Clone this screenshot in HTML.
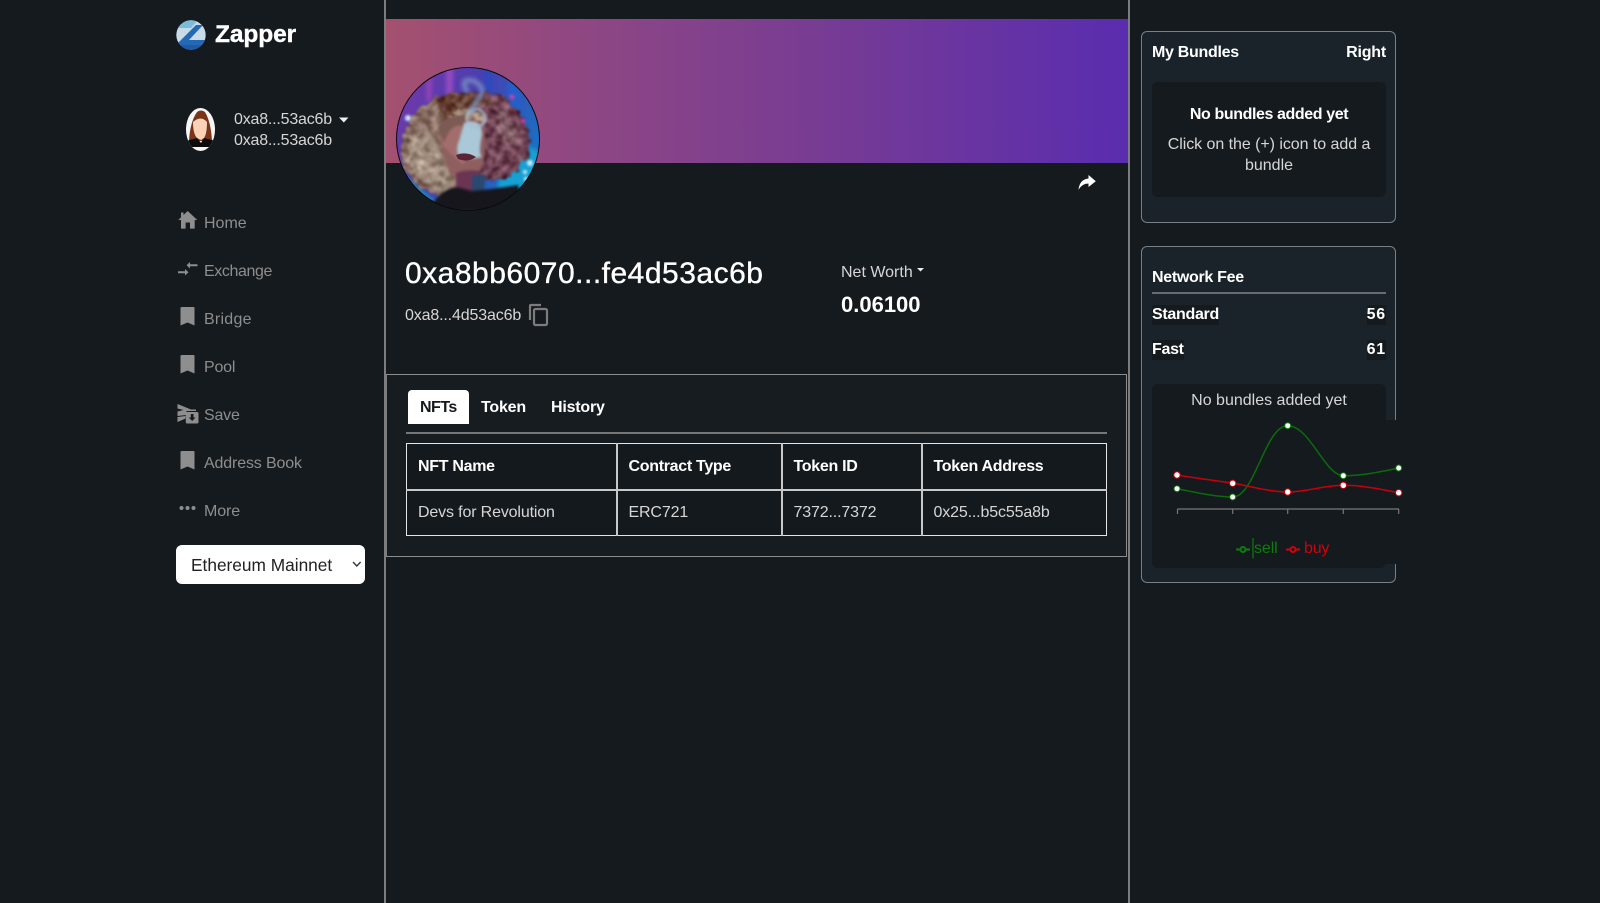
<!DOCTYPE html>
<html lang="en"><head><meta charset="utf-8"><title>Zapper</title>
<style>
html,body{margin:0;padding:0;width:1600px;height:903px;overflow:hidden;background:#151a1e;color:#fff;font-family:"Liberation Sans",sans-serif;font-size:16px}
.a{position:absolute;white-space:nowrap;line-height:20px}
.b{font-weight:700}
.g{color:#d6d6d6}
.n{color:#8e8e8e;left:204px}
.box{position:absolute;box-sizing:border-box}
svg{position:absolute;overflow:visible}
table{position:absolute;left:406px;top:443px;width:701px;height:93px;border-collapse:collapse;table-layout:fixed;background:#14191d;border:1px solid #e4e4e4}
td,th{border:1px solid #e4e4e4;border-left:2px solid #c8c8c8;padding:0 0 0 11px;text-align:left;font-size:16px;line-height:20px}
td:first-child,th:first-child{border-left:1px solid #e4e4e4}
td{color:#d6d6d6;letter-spacing:-.15px;padding-top:1px}
th{letter-spacing:-.3px;border-bottom:2px solid #c8c8c8;padding-top:1px}
</style></head><body>

<div class="box" style="left:384px;top:0;width:2px;height:903px;background:#7d7d7d"></div>
<div class="box" style="left:1128px;top:0;width:2px;height:903px;background:#7d7d7d"></div>

<!-- logo -->
<svg style="left:176px;top:20px" width="30" height="30" viewBox="0 0 30 30">
<defs><clipPath id="lc"><circle cx="15" cy="15" r="14.7"/></clipPath></defs>
<g clip-path="url(#lc)"><rect width="30" height="30" fill="#c9dbe6"/>
<path d="M0 0H22L15 8H0Z" fill="#79bdd8"/>
<path d="M20 5H27L13 20H30V30H0V25Z" fill="#2568b6"/>
<path d="M0 30H30V25H0Z" fill="#1f5aa4"/></g></svg>
<div class="a b" style="left:215px;top:21px;font-size:24.5px;line-height:28px;-webkit-text-stroke:.4px #fff;letter-spacing:-.1px">Zapper</div>

<!-- user -->
<svg style="left:186px;top:108px" width="30" height="44" viewBox="0 0 30 44">
<defs><clipPath id="uc"><ellipse cx="14.5" cy="21.5" rx="14.5" ry="21.5"/></clipPath></defs>
<g clip-path="url(#uc)"><rect width="30" height="44" fill="#f7f7f7"/>
<path d="M11 4Q15 1 19 4Q25 14 26 33H3Q4 14 11 4Z" fill="#7a3518"/>
<path d="M7 14Q15 7 21 14Q21 26 18 30L15 32L11 30Q7 26 7 14Z" fill="#fbd1b8"/>
<path d="M0 33L11 30L15 35L18 30L30 33V39H0Z" fill="#0b0b0b"/></g></svg>
<div class="a g" style="left:234px;top:110px;letter-spacing:-.2px">0xa8...53ac6b</div>
<div class="a g" style="left:234px;top:131px;letter-spacing:-.2px">0xa8...53ac6b</div>
<svg style="left:339px;top:117px" width="10" height="6"><path d="M0 .5H9.5L4.8 5.5Z" fill="#eee"/></svg>

<!-- nav -->
<svg style="left:178px;top:211px" width="20" height="18" viewBox="0 0 20 18"><path d="M9.7 0L19.3 9H16.7V17.6H12V11.5H7.6V17.6H3V9H.2L3 6.4V1.5H5.5V4Z" fill="#8e8e8e"/></svg>
<div class="a n" style="top:214px">Home</div>
<svg style="left:178px;top:261px" width="20" height="16" viewBox="0 0 20 16"><path d="M0 10.200H7V8L10.500 11.200L7 14.500V12.200H0ZM19.500 3.200H12V1L8.500 4.200L12 7.500V5.200H19.500Z" fill="#8e8e8e"/></svg>
<div class="a n" style="top:262px;letter-spacing:-.4px">Exchange</div>
<svg style="left:180px;top:307px" width="15" height="19" viewBox="0 0 15 19"><path d="M1.500 0H13.500Q14.500 0 14.500 1V18.500L7.500 15.500L.5 18.500V1Q.5 0 1.500 0Z" fill="#8e8e8e"/></svg>
<div class="a n" style="top:310px;letter-spacing:.25px">Bridge</div>
<svg style="left:180px;top:355px" width="15" height="19" viewBox="0 0 15 19"><path d="M1.500 0H13.500Q14.500 0 14.500 1V18.500L7.500 15.500L.5 18.500V1Q.5 0 1.500 0Z" fill="#8e8e8e"/></svg>
<div class="a n" style="top:358px;letter-spacing:-.2px">Pool</div>
<svg style="left:177px;top:404px" width="22" height="20" viewBox="0 0 22 20"><path d="M.5 0L14 5.500H19V7H9.500V11L.5 12V7.500L6.500 6L.5 4.500ZM.5 13L8.500 12V14.500L.5 18Z" fill="#8e8e8e"/><path d="M10 8H20Q21.500 8 21.500 9.500V18Q21.500 19.500 20 19.500H10Q8.800 19.500 8.800 18V9.500Q8.800 8 10 8Z" fill="#8e8e8e"/><path d="M13.800 10H16.500V13.500H18.500L15.200 17L11.800 13.500H13.800Z" fill="#151a1e"/></svg>
<div class="a n" style="top:406px;letter-spacing:-.2px">Save</div>
<svg style="left:180px;top:451px" width="15" height="19" viewBox="0 0 15 19"><path d="M1.500 0H13.500Q14.500 0 14.500 1V18.500L7.500 15.500L.5 18.500V1Q.5 0 1.500 0Z" fill="#8e8e8e"/></svg>
<div class="a n" style="top:454px;letter-spacing:-.15px">Address Book</div>
<svg style="left:179px;top:505px" width="17" height="6"><circle cx="2.500" cy="3" r="2" fill="#8e8e8e"/><circle cx="8.500" cy="3" r="2" fill="#8e8e8e"/><circle cx="14.500" cy="3" r="2" fill="#8e8e8e"/></svg>
<div class="a n" style="top:502px;letter-spacing:-.1px">More</div>

<div class="box" style="left:176px;top:545px;width:189px;height:39px;background:#fff;border-radius:6px"></div>
<div class="a" style="left:191px;top:555px;color:#222;font-size:17.3px">Ethereum Mainnet</div>
<svg style="left:352px;top:561px" width="10" height="7"><path d="M1 1L4.800 5L8.600 1" stroke="#333" stroke-width="1.300" fill="none"/></svg>

<!-- banner -->
<div class="box" style="left:386px;top:19px;width:742px;height:144px;background:linear-gradient(90deg,#a4516f 0%,#8c4685 30%,#763b94 60%,#5a2daf 100%)"></div>

<!-- photo -->
<svg style="left:396px;top:67px" width="144" height="144" viewBox="0 0 144 144">
<defs>
<clipPath id="pc"><circle cx="72" cy="72" r="71.500"/></clipPath>
<linearGradient id="bg" x1="0" x2="1" y1="0" y2=".5"><stop offset="0" stop-color="#7b36a8"/><stop offset=".5" stop-color="#4a3fb0"/><stop offset="1" stop-color="#1a6fc4"/></linearGradient>
<filter id="curl" x="-10%" y="-10%" width="120%" height="120%" color-interpolation-filters="sRGB"><feTurbulence type="fractalNoise" baseFrequency=".14" numOctaves="2" seed="7" result="n"/><feDisplacementMap in="SourceGraphic" in2="n" scale="9" xChannelSelector="R" yChannelSelector="G" result="d"/><feColorMatrix in="n" type="matrix" values="1 0 0 0 0 1 0 0 0 0 1 0 0 0 0 0 0 0 0 1" result="g"/><feComposite in="g" in2="d" operator="in" result="gc"/><feComposite in="d" in2="gc" operator="arithmetic" k1="0" k2="1" k3=".6" k4="-.32" result="m"/><feGaussianBlur in="m" stdDeviation="1"/></filter>
<filter id="bl" x="-30%" y="-30%" width="160%" height="160%"><feGaussianBlur stdDeviation="2"/></filter>
<filter id="bl2" x="-30%" y="-30%" width="160%" height="160%"><feGaussianBlur stdDeviation="1.300"/></filter>
</defs>
<g clip-path="url(#pc)">
<rect width="144" height="144" fill="url(#bg)"/>
<g filter="url(#bl)" opacity=".8"><rect x="30" y="0" width="6" height="35" fill="#9a45b8"/><rect x="50" y="0" width="7" height="30" fill="#a650c4"/><rect x="88" y="0" width="9" height="35" fill="#2b4cc0"/><rect x="112" y="10" width="12" height="50" fill="#2262d0"/></g>
<path d="M105 85Q130 75 144 85V144H100Z" fill="#19a0d4" filter="url(#bl)"/>
<path d="M0 100L50 144H0Z" fill="#1493c0" filter="url(#bl)"/>
<g filter="url(#curl)">
<path d="M66 28Q106 16 126 50Q140 76 128 96Q112 118 86 112Q60 108 66 28Z" fill="#744858"/>
<path d="M80 28Q44 20 20 46Q0 70 6 98Q24 134 62 130Q76 112 72 70Z" fill="#8e7468"/>
<path d="M38 32Q70 18 102 38Q76 38 50 54Z" fill="#6b4538"/>
<path d="M12 70Q34 54 44 84Q58 112 60 128Q30 124 14 100Z" fill="#a39080"/>
<path d="M58 44Q76 36 92 52Q80 60 56 56Z" fill="#a8927e"/>
<path d="M98 40Q120 50 124 76Q112 84 104 66Z" fill="#86606a"/>
</g>
<path d="M44 58Q66 44 88 58Q92 84 84 104Q72 116 60 112Q44 96 44 58Z" fill="#8f5f60" filter="url(#bl2)"/>
<path d="M46 62Q62 52 68 62L68 98Q56 88 46 78Z" fill="#a26e6c" filter="url(#bl2)"/>
<path d="M42 60Q50 48 70 48L68 58Q54 56 48 76Z" fill="#7d5a52" filter="url(#bl2)"/>
<path d="M68 56Q86 50 86 68Q82 86 86 90Q70 94 62 88Q60 80 63 74Z" fill="#a9c8d8" filter="url(#bl2)"/>
<circle cx="80" cy="51" r="9" fill="none" stroke="#a9bdd0" stroke-width="3" opacity=".8" filter="url(#bl2)"/>
<path d="M72 26Q62 10 78 14Q92 22 82 32Q78 38 74 46" fill="none" stroke="#7c97c4" stroke-width="5" opacity=".8" filter="url(#bl)"/>
<path d="M60 88Q70 84 80 90Q72 96 62 92Z" fill="#5a2436"/>
<path d="M60 106Q70 102 84 104L84 126H60Z" fill="#6a3552" filter="url(#bl2)"/>
<path d="M76 108L90 108L88 126L76 126Z" fill="#2a4a70" filter="url(#bl2)"/>
<path d="M32 144Q44 122 60 120L76 124Q98 122 122 118L128 144Z" fill="#12151f" filter="url(#bl2)"/>
<g fill="#cdeefa" filter="url(#bl2)"><circle cx="12" cy="51" r="3"/><circle cx="134" cy="96" r="3"/><circle cx="129" cy="105" r="2"/><circle cx="130" cy="112" r="2"/></g>
<g fill="#c145a8" filter="url(#bl2)"><circle cx="116" cy="30" r="2.500"/><circle cx="127" cy="54" r="2.500"/></g>
</g>
<circle cx="72" cy="72" r="71.500" fill="none" stroke="#0a0a0e" stroke-width="1"/>
</svg>

<!-- share -->
<svg style="left:1078px;top:175px" width="18" height="15" viewBox="0 0 18 15"><path d="M10.500 0L17.800 6.300L10.500 12V8.500Q4 8.500 .5 14.800Q1.500 4.500 10.500 3.500Z" fill="#fff"/></svg>

<!-- headline -->
<div class="a" style="left:405px;top:256px;font-size:30px;line-height:36px;letter-spacing:.5px;-webkit-text-stroke:.35px #fff">0xa8bb6070...fe4d53ac6b</div>
<div class="a g" style="left:405px;top:306px;letter-spacing:-.15px">0xa8...4d53ac6b</div>
<svg style="left:529px;top:304px" width="19" height="22" viewBox="0 0 19 22"><path d="M1 16V2Q1 1 2 1H12" fill="none" stroke="#7c7c7c" stroke-width="2.200"/><rect x="5" y="5" width="13" height="16" rx="1.500" fill="none" stroke="#7c7c7c" stroke-width="2.200"/></svg>

<div class="a g" style="left:841px;top:263px;letter-spacing:0">Net Worth</div>
<svg style="left:917px;top:268px" width="7" height="4"><path d="M0 0H7L3.500 3.500Z" fill="#eee"/></svg>
<div class="a b" style="left:841px;top:295px;font-size:22px">0.06100</div>

<!-- section -->
<div class="box" style="left:386px;top:374px;width:741px;height:183px;border:1px solid #8c8c8c;border-width:1px 1px 1px 0;background:#161c20"></div>
<div class="box" style="left:386px;top:375px;width:1px;height:181px;background:#7d7d7d"></div>
<div class="box" style="left:408px;top:390px;width:61px;height:34px;background:#fff;border-radius:4px 4px 0 0"></div>
<div class="a b" style="left:420px;top:398px;color:#15191d;letter-spacing:-.5px">NFTs</div>
<div class="a b" style="left:481px;top:398px;letter-spacing:-.2px">Token</div>
<div class="a b" style="left:551px;top:398px;letter-spacing:-.2px">History</div>
<div class="box" style="left:406px;top:432px;width:701px;height:2px;background:#777"></div>

<table><colgroup><col style="width:210px"><col style="width:165px"><col style="width:140px"><col></colgroup>
<tr><th>NFT Name</th><th>Contract Type</th><th>Token ID</th><th>Token Address</th></tr>
<tr><td>Devs for Revolution</td><td>ERC721</td><td>7372...7372</td><td>0x25...b5c55a8b</td></tr></table>

<!-- right cards -->
<div class="box" style="left:1141px;top:31px;width:255px;height:192px;background:#1a232a;border:1.500px solid #7a8084;border-radius:6px"></div>
<div class="a b" style="left:1152px;top:43px;letter-spacing:-.3px">My Bundles</div>
<div class="a b" style="right:214px;top:43px;letter-spacing:-.2px">Right</div>
<div class="box" style="left:1152px;top:82px;width:234px;height:115px;background:#151a1e;border-radius:6px"></div>
<div class="a b" style="left:1152px;width:234px;text-align:center;top:105px;letter-spacing:-.4px">No bundles added yet</div>
<div class="a g" style="left:1152px;width:234px;text-align:center;top:135px;letter-spacing:-.05px">Click on the (+) icon to add a</div>
<div class="a g" style="left:1152px;width:234px;text-align:center;top:156px">bundle</div>

<div class="box" style="left:1141px;top:246px;width:255px;height:337px;background:#1a232a;border:1.500px solid #7a8084;border-radius:6px"></div>
<div class="a b" style="left:1152px;top:268px;letter-spacing:-.3px">Network Fee</div>
<div class="box" style="left:1152px;top:292px;width:234px;height:2px;background:#666c70"></div>
<div class="a b" style="left:1152px;top:305px;background:#151a1e;letter-spacing:-.3px">Standard</div>
<div class="a b" style="right:214px;top:305px;background:#151a1e;letter-spacing:.8px">56</div>
<div class="a b" style="left:1152px;top:340px;background:#151a1e;letter-spacing:-.3px">Fast</div>
<div class="a b" style="right:214px;top:340px;background:#151a1e;letter-spacing:.8px">61</div>
<div class="box" style="left:1152px;top:384px;width:234px;height:184px;background:#151a1e;border-radius:6px"></div>
<div class="a g" style="left:1152px;width:234px;text-align:center;top:391px;letter-spacing:0">No bundles added yet</div>

<!-- chart -->
<svg style="left:0;top:0" width="1600" height="903">
<rect x="1152" y="420" width="250" height="144" fill="#151a1e"/>
<path d="M1177.500 509V514M1177.500 509H1399M1232.700 509V514M1287.700 509V514M1343.300 509V514M1398.700 509V514" stroke="#777" stroke-width="1.200" fill="none"/>
<path d="M1177 488.700C1195 492 1215 497 1232.700 497C1255 497 1265 425.700 1287.700 425.700C1310 425.700 1325 475.700 1343.300 475.700C1362 475.700 1380 472 1398.700 468" stroke="#0b6b0b" stroke-width="1.500" fill="none"/>
<path d="M1177 475C1195 478 1215 480.500 1232.700 483.300C1250 486 1270 492 1287.700 492C1305 492 1325 485.300 1343.300 485.300C1362 485.300 1380 489 1398.700 492.700" stroke="#c8000a" stroke-width="1.500" fill="none"/>
<g fill="#fff" stroke="#0b7d0b" stroke-width="1"><circle cx="1177" cy="488.700" r="3"/><circle cx="1232.700" cy="497" r="3"/><circle cx="1287.700" cy="425.700" r="3"/><circle cx="1343.300" cy="475.700" r="3"/><circle cx="1398.700" cy="468" r="3"/></g>
<g fill="#fff" stroke="#d4000a" stroke-width="1"><circle cx="1177" cy="475" r="3.200"/><circle cx="1232.700" cy="483.300" r="3.200"/><circle cx="1287.700" cy="492" r="3.200"/><circle cx="1343.300" cy="485.300" r="3.200"/><circle cx="1398.700" cy="492.700" r="3.200"/></g>
<path d="M1236 549.500H1250" stroke="#0b7d0b" stroke-width="2"/><circle cx="1243" cy="549.500" r="2.500" fill="#151a1e" stroke="#0b7d0b" stroke-width="2"/>
<path d="M1253 538V558.500" stroke="#0b7d0b" stroke-width="1.200"/>
<path d="M1286 549.500H1300" stroke="#d4000a" stroke-width="2"/><circle cx="1293" cy="549.500" r="2.500" fill="#151a1e" stroke="#d4000a" stroke-width="2"/>
</svg>
<div class="a" style="left:1254px;top:539px;color:#0b7d0b;letter-spacing:-.1px">sell</div>
<div class="a" style="left:1304px;top:539px;color:#d4000a;letter-spacing:-.2px">buy</div>
</body></html>
